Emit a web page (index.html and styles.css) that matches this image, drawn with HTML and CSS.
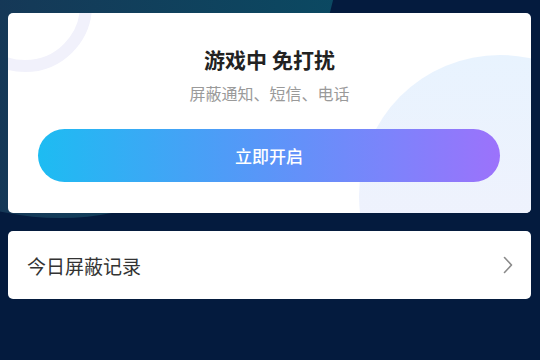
FILE: index.html
```html
<!DOCTYPE html>
<html lang="zh-CN">
<head>
<meta charset="utf-8">
<title>游戏免打扰</title>
<link rel="stylesheet" href="styles.css">
</head>
<body>
<div class="glow"></div>
<main class="page">
  <section class="card card-main">
    <div class="ring"></div>
    <div class="bubble"></div>
    <h1 class="title">游戏中 免打扰</h1>
    <p class="subtitle">屏蔽通知、短信、电话</p>
    <button class="btn">立即开启</button>
  </section>
  <section class="card card-row">
    <span class="row-label">今日屏蔽记录</span>
    <svg class="chevron" width="10" height="18" viewBox="0 0 10 18"><path d="M1.5 1.5 L8.5 9 L1.5 16.5" fill="none" stroke="#8a8a8a" stroke-width="1.6" stroke-linecap="round" stroke-linejoin="round"/></svg>
  </section>
</main>
</body>
</html>
```
FILE: styles.css
```css
html, body {
  margin: 0;
  padding: 0;
}
body {
  width: 540px;
  height: 360px;
  overflow: hidden;
  position: relative;
  background: #041b3e;
  font-family: "Noto Sans CJK SC", "Noto Sans", sans-serif;
}
.glow {
  position: absolute;
  left: -220px;
  top: -342px;
  width: 560px;
  height: 560px;
  border-radius: 50%;
  background: linear-gradient(90deg, #1b2950 0%, #143a58 45%, #0b4962 100%);
}
.page {
  position: relative;
  display: flex;
  flex-direction: column;
  gap: 18px;
  padding: 13px 9px 0 8px;
}
.card {
  background: #ffffff;
  border-radius: 5px;
}
.card-main {
  position: relative;
  overflow: hidden;
  height: 200px;
  display: flex;
  flex-direction: column;
  align-items: center;
}
.ring {
  position: absolute;
  left: -50px;
  top: -75px;
  width: 134px;
  height: 134px;
  box-sizing: border-box;
  border: 12px solid #f1f1fb;
  border-radius: 50%;
}
.bubble {
  position: absolute;
  left: 351px;
  top: 42px;
  width: 282px;
  height: 282px;
  border-radius: 50%;
  background: linear-gradient(180deg, #e8f3fe 0%, #eff2fd 60%, #f3f0fd 100%);
}
.title {
  position: relative;
  margin: 31px 0 0;
  font-size: 21px;
  line-height: 30px;
  font-weight: 700;
  color: #222222;
}
.subtitle {
  position: relative;
  margin: 8px 0 0;
  font-size: 16px;
  line-height: 22px;
  color: #9a9a9a;
}
.btn {
  position: relative;
  align-self: stretch;
  margin: 25px 31px 0 30px;
  height: 53px;
  border: none;
  border-radius: 27px;
  background: linear-gradient(90deg, #1dbcf2 0%, #4e9cf7 40%, #7b84fb 75%, #9c72fb 100%);
  color: #ffffff;
  font-family: inherit;
  font-size: 17px;
  font-weight: 500;
  padding: 0;
}
.card-row {
  height: 68px;
  display: flex;
  align-items: center;
  justify-content: space-between;
  padding: 0 18px 0 19px;
}
.row-label {
  font-size: 19px;
  color: #333333;
}
.chevron {
  display: block;
}
```
